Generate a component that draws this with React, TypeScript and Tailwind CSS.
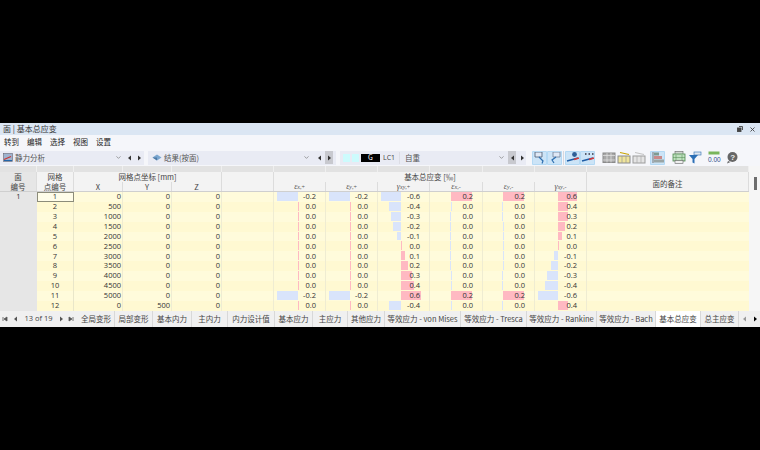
import React from "react";
import { ChevronDown, X } from "lucide-react";

const cols = "grid grid-cols-[37px_37px_49px_49px_50px_52px_52px_52px_52px_53px_52px_52px_162px]";
const cjk = { fontFamily: '"Noto Sans CJK SC", sans-serif' };

const xs = [0, 500, 1000, 1500, 2000, 2500, 3000, 3500, 4000, 4500, 5000, 0];
const ys = [0, 0, 0, 0, 0, 0, 0, 0, 0, 0, 0, 500];
const gPlus = ["-0.6", "-0.4", "-0.3", "-0.2", "-0.1", "0.0", "0.1", "0.2", "0.3", "0.4", "0.6", "-0.4"];
const gMinus = ["0.6", "0.4", "0.3", "0.2", "0.1", "0.0", "-0.1", "-0.2", "-0.3", "-0.4", "-0.6", "0.4"];
const zero = ["0.0", "0.0", "0.0", "0.0", "0.0", "0.0", "0.0", "0.0", "0.0", "0.0", "0.0", "0.0"];

const withEnds = (v: string) => zero.map((z, i) => (i === 0 || i === 10 ? v : z));

// bar length in px, negative goes left of the zero line
const strainCols = [
  { zero: 24, vals: withEnds("-0.2"), bars: [-21, 0.4, 1, 1, 1, 1, 1, 1, 0.4, 0.4, -21, 0.4] },
  { zero: 24, vals: withEnds("-0.2"), bars: [-21, 0.8, 0.8, 0.3, 0.3, 0.3, 0.3, 0.3, 0.8, 0.8, -21, 0.8] },
  { zero: 23, vals: gPlus, bars: [-20, -12, -10, -8, -4, 0.6, 4, 7, 11, 13, 20, -12] },
  { zero: 21, vals: withEnds("0.2"), bars: [21, -0.4, -1, -1, -1, -1, -1, -1, -0.4, -0.4, 21, -0.4] },
  { zero: 20, vals: withEnds("0.2"), bars: [21, -0.8, -0.8, -0.3, -0.3, -0.3, -0.3, -0.3, -0.8, -0.8, 21, -0.8] },
  { zero: 23, vals: gMinus, bars: [19, 10, 10, 7, 4, 0.6, -4, -7, -11, -13, -20, 10] },
];

const tabs = [
  { label: "全局变形", w: "w-[37px]" },
  { label: "局部变形", w: "w-[38px]" },
  { label: "基本内力", w: "w-[39px]" },
  { label: "主内力", w: "w-[36px]" },
  { label: "内力设计值", w: "w-[47px]" },
  { label: "基本应力", w: "w-[38px]" },
  { label: "主应力", w: "w-[35px]" },
  { label: "其他应力", w: "w-[37px]" },
  { label: "等效应力 - von Mises", w: "w-[76px]" },
  { label: "等效应力 - Tresca", w: "w-[66px]" },
  { label: "等效应力 - Rankine", w: "w-[70px]" },
  { label: "等效应力 - Bach", w: "w-[59px]" },
  { label: "基本总应变", w: "w-[45px]", active: true },
  { label: "总主应变", w: "w-[38px]" },
];

const Tri = ({ dir, color = "#333" }: { dir: "l" | "r"; color?: string }) => (
  <svg width="5" height="6" viewBox="0 0 5 6">
    <path d={dir === "l" ? "M4 0.5V5.5L1 3Z" : "M1 0.5V5.5L4 3Z"} fill={color} />
  </svg>
);

const Skip = ({ dir }: { dir: "l" | "r" }) => (
  <svg width="6" height="6" viewBox="0 0 6 6">
    <path d={dir === "l" ? "M1 1V5M5 1V5L2 3Z" : "M5 1V5M1 1V5L4 3Z"} stroke="#555" strokeWidth="0.8" fill="#555" />
  </svg>
);

const StepBtns = ({ dim }: { dim?: "l" | "r" }) => (
  <div className="flex h-[13px] shrink-0 items-center">
    <div className={`flex h-full w-[8px] items-center justify-center ${dim === "l" ? "bg-[#c8c9cf]" : ""}`}>
      <Tri dir="l" />
    </div>
    <div className="w-[2px]" />
    <div className={`flex h-full w-[8px] items-center justify-center ${dim === "r" ? "bg-[#c8c9cf]" : ""}`}>
      <Tri dir="r" />
    </div>
  </div>
);

const ToolIcon = ({ children, on }: { children: React.ReactNode; on?: boolean }) => (
  <div className={`flex h-[14px] w-[15px] shrink-0 items-center justify-center rounded-[1px] ${on ? "bg-[#cce4f7] outline outline-[#b4d9f4] -outline-offset-1" : ""}`}>
    <svg width="14" height="13" viewBox="0 0 14 13">
      {children}
    </svg>
  </div>
);

const Sep = () => <div className="mx-px h-[14px] w-px shrink-0 bg-[#d6d7de]" />;

const Th = ({ children, className = "" }: { children?: React.ReactNode; className?: string }) => (
  <div className={`flex items-center justify-center overflow-hidden whitespace-nowrap border-r border-[#dcdcdc] ${className}`}>{children}</div>
);

const Sub = ({ sym, sub }: { sym: string; sub: string }) => (
  <span className="text-[8px] text-[#555]" style={{ fontFamily: '"Liberation Serif", serif' }}>
    <i>{sym}</i>
    <span className="text-[6px]">
      <i>{sub.split(",")[0]}</i>,{sub.split(",")[1]}
    </span>
  </span>
);

export default function App() {
  return (
    <div className="flex h-[450px] w-[760px] flex-col bg-black pt-[123px] text-[#333]" style={cjk}>
      <div className="flex h-[204px] w-full flex-col overflow-hidden bg-white">
        {/* title */}
        <div className="flex h-[12px] shrink-0 items-center justify-between bg-[#dbe6f3] pl-[3px] pr-[3px] text-[8px] leading-none">
          <span>面 | 基本总应变</span>
          <div className="flex items-center gap-[6px] pr-[1px]">
            <svg width="6" height="6" viewBox="0 0 6 6" fill="none" stroke="#444" strokeWidth="0.9">
              <rect x="0.5" y="2" width="3.5" height="3.5" fill="#444" />
              <path d="M2 0.5H5.5V4" />
            </svg>
            <X size={7} strokeWidth={3} color="#444" />
          </div>
        </div>

        {/* menu */}
        <div className="flex h-[14px] shrink-0 items-center gap-[8px] bg-[#f5f6fa] pl-[4px] text-[7.5px] leading-none text-[#222]">
          <span>转到</span>
          <span>编辑</span>
          <span>选择</span>
          <span>视图</span>
          <span>设置</span>
        </div>

        {/* toolbar */}
        <div className="flex h-[17px] shrink-0 items-center bg-[#f5f6fa] text-[7.5px] leading-none">
          <div className="flex h-[14px] w-[124px] shrink-0 items-center bg-[#e9ebf4] pl-[3px]">
            <svg width="10" height="9" viewBox="0 0 10 9">
              <rect x="0.5" y="0.5" width="9" height="8" fill="#9fb3cf" stroke="#667" strokeWidth="0.6" />
              <path d="M1 6.5L8 3.5" stroke="#c33" strokeWidth="1.2" />
              <path d="M1 7.5H9" stroke="#26a" strokeWidth="1" />
            </svg>
            <span className="ml-[2px] flex-1 text-[#555]">静力分析</span>
            <ChevronDown size={7} color="#666" className="mr-[2px]" />
          </div>
          <div className="flex h-[14px] w-[20px] shrink-0 items-center justify-center bg-[#e9ebf4]">
            <StepBtns />
          </div>
          <div className="w-[4px] shrink-0" />
          <div className="flex h-[14px] w-[164px] shrink-0 items-center bg-[#e9ebf4] pl-[4px]">
            <svg width="10" height="7" viewBox="0 0 10 7">
              <path d="M0.5 3.5L5 0.5L9.5 3.5L5 6.5Z" fill="#7aa6cf" />
              <path d="M0.5 3.5L5 6.5V3.5Z" fill="#4e7aa5" />
            </svg>
            <span className="ml-[2px] flex-1 text-[#555]">结果(按面)</span>
            <ChevronDown size={7} color="#666" className="mr-[2px]" />
          </div>
          <div className="flex h-[14px] w-[24px] shrink-0 items-center justify-center bg-[#e9ebf4]">
            <StepBtns dim="r" />
          </div>
          <div className="w-[4px] shrink-0" />
          <div className="flex h-[14px] w-[186px] shrink-0 items-center bg-[#e9ebf4] pl-[3px]">
            <div className="h-[8px] w-[7px] bg-[#cdfbfd]" />
            <div className="ml-[2px] h-[8px] w-[7px] bg-[#cdfbfd]" />
            <div className="ml-[2px] flex h-[8px] w-[19px] items-center justify-center bg-black text-[7px] text-white">G</div>
            <span className="ml-[3px] w-[13px] text-[7px] text-[#444]" style={{ fontFamily: '"Open Sans", sans-serif' }}>LC1</span>
            <div className="mx-[3px] h-[12px] w-px bg-[#dcdde5]" />
            <span className="ml-[2px] flex-1 text-[#555]">自重</span>
            <ChevronDown size={7} color="#666" className="mr-[3px]" />
            <StepBtns dim="l" />
          </div>
          <div className="w-[6px] shrink-0" />
          <div className="flex shrink-0 items-center">
            <ToolIcon on>
              <path d="M2 1H9V6H2Z" fill="#dfe8f5" stroke="#5a6a80" strokeWidth="0.9" />
              <path d="M6 6L10 10L9 12.5" fill="none" stroke="#2e6fb0" strokeWidth="1.2" />
            </ToolIcon>
            <ToolIcon on>
              <path d="M5 1H12V6H5Z" fill="#dfe8f5" stroke="#7a8aa0" strokeWidth="0.9" />
              <path d="M8 6L4 9L6 12" fill="none" stroke="#2e6fb0" strokeWidth="1.2" />
            </ToolIcon>
            <Sep />
            <ToolIcon on>
              <circle cx="8.5" cy="3.5" r="2.4" fill="#2e5f96" />
              <path d="M1 10L12 7" stroke="#1f5da5" strokeWidth="1.6" />
              <path d="M8 8.5L13 7" stroke="#d43a3a" strokeWidth="1.6" />
            </ToolIcon>
            <ToolIcon on>
              <path d="M4 3H5.5M7.5 3H9M11 3H12.5" stroke="#334" strokeWidth="1.4" />
              <path d="M1 10L12 7" stroke="#1f5da5" strokeWidth="1.6" />
              <path d="M8 8.5L13 7" stroke="#d43a3a" strokeWidth="1.6" />
            </ToolIcon>
            <div className="w-[6px] shrink-0" />
            <ToolIcon>
              <rect x="1" y="2" width="12" height="9.5" fill="#a8a8a8" stroke="#8a8a8a" />
              <path d="M5 2V11.5M9 2V11.5M1 4.5H13M1 9H13" stroke="#e5e5e5" strokeWidth="0.7" />
            </ToolIcon>
            <ToolIcon>
              <rect x="1" y="5" width="12" height="7" fill="#efe49a" stroke="#8a8a8a" />
              <path d="M5 5V12M9 5V12" stroke="#999" strokeWidth="0.7" />
              <path d="M3 1.5L12 3.5" stroke="#c9a400" strokeWidth="1.2" />
            </ToolIcon>
            <ToolIcon>
              <rect x="1" y="5" width="12" height="7" fill="#e4e4e4" stroke="#9c9c9c" />
              <path d="M5 5V12M9 5V12" stroke="#aaa" strokeWidth="0.7" />
              <path d="M3 1.5L12 3.5" stroke="#c4c4c4" strokeWidth="1.2" />
            </ToolIcon>
            <div className="w-[4px] shrink-0" />
            <ToolIcon on>
              <path d="M2 1V12" stroke="#777" strokeWidth="1" />
              <rect x="3" y="1.5" width="5" height="3" fill="#7e9a92" />
              <rect x="3" y="5" width="8" height="3" fill="#c98a8a" />
              <rect x="3" y="8.5" width="10" height="3" fill="#9aa5a5" />
            </ToolIcon>
            <div className="w-[6px] shrink-0" />
            <ToolIcon>
              <rect x="3" y="0.5" width="8" height="3" fill="#cfd6cf" stroke="#666" strokeWidth="0.6" />
              <rect x="1" y="3" width="12" height="7" fill="#bfe0bf" stroke="#4f8a4f" strokeWidth="0.8" />
              <path d="M4 4V9M10 4V9M1 6.5H13" stroke="#4f8a4f" strokeWidth="0.5" />
              <rect x="3" y="9.5" width="8" height="3" fill="#eee" stroke="#666" strokeWidth="0.6" />
            </ToolIcon>
            <div className="w-px shrink-0" />
            <ToolIcon>
              <path d="M1 4H10L6.5 8V12.5L4.5 11.5V8Z" fill="#2c6fb5" />
              <rect x="6" y="1" width="7" height="3" fill="#dfe6ee" stroke="#2c6fb5" strokeWidth="0.6" />
            </ToolIcon>
            <div className="w-[4px] shrink-0" />
            <ToolIcon>
              <rect x="1.5" y="0.5" width="11" height="3" fill="#7ab55c" />
              <text x="1" y="11" fontSize="6.5" fill="#2b4f8a" style={{ fontFamily: '"Liberation Sans", sans-serif' }}>0.00</text>
            </ToolIcon>
            <div className="w-[3px] shrink-0" />
            <ToolIcon>
              <circle cx="7.5" cy="6" r="5" fill="#666" />
              <path d="M3 10L2 12.5L5.5 11Z" fill="#666" />
              <text x="5.3" y="9" fontSize="8" fontWeight="700" fill="#eee" style={{ fontFamily: '"Liberation Sans", sans-serif' }}>?</text>
            </ToolIcon>
          </div>
        </div>

        {/* table + scroll */}
        <div className="flex min-h-0 flex-1">
          <div className="flex w-[749px] shrink-0 flex-col">
            <div className={`${cols} h-[6px] shrink-0 bg-[#e2e2e2]`}>
              {Array.from({ length: 13 }).map((_, i) => (
                <div key={i} className="border-r border-[#efefef]" />
              ))}
            </div>
            <div className={`${cols} h-[20px] shrink-0 grid-rows-[10px_9px] border-b border-[#cfcfcf] bg-[#f3f3f3] text-[7.5px] leading-none text-[#444]`}>
              <Th className="row-span-2 flex-col bg-[#e6e6e6]">
                <span>面</span>
                <span className="mt-[2px]">编号</span>
              </Th>
              <Th className="row-span-2 flex-col">
                <span>网格</span>
                <span className="mt-[2px]">点编号</span>
              </Th>
              <Th className="col-span-3">网格点坐标 [mm]</Th>
              <Th className="row-span-2" />
              <Th className="col-span-6">基本总应变 [‰]</Th>
              <Th className="row-span-2 pt-[5px]">面的备注</Th>
              <Th>X</Th>
              <Th>Y</Th>
              <Th>Z</Th>
              <Th><Sub sym="ε" sub="x,+" /></Th>
              <Th><Sub sym="ε" sub="y,+" /></Th>
              <Th><Sub sym="γ" sub="xy,+" /></Th>
              <Th><Sub sym="ε" sub="x,-" /></Th>
              <Th><Sub sym="ε" sub="y,-" /></Th>
              <Th><Sub sym="γ" sub="xy,-" /></Th>
            </div>
            <div className="flex min-h-0 flex-1 flex-col overflow-hidden text-[7.5px] leading-none text-[#333]" style={{ fontFamily: '"Open Sans", sans-serif' }}>
              {xs.map((x, i) => (
                <div key={i} className={`${cols} h-[9.9px] shrink-0 ${i % 2 === 0 ? "bg-[#fffbdb]" : "bg-[#fff9d2]"}`}>
                  <div className="flex items-center justify-center bg-[#e6e6e6]">{i === 0 ? "1" : ""}</div>
                  <div className={`flex items-center justify-center border-r border-[#e9e6c9] ${i === 0 ? "outline outline-[#8c8c7a] -outline-offset-1 bg-[#fffde9]" : ""}`}>{i + 1}</div>
                  <div className="flex items-center justify-end border-r border-[#efecd2] pr-[1px]">{x}</div>
                  <div className="flex items-center justify-end border-r border-[#efecd2] pr-[1px]">{ys[i]}</div>
                  <div className="flex items-center justify-end border-r border-[#efecd2] pr-[1px]">0</div>
                  <div className="border-r border-[#efecd2]" />
                  {strainCols.map((c, j) => {
                    const b = c.bars[i];
                    const len = Math.abs(b);
                    return (
                      <div key={j} className="relative flex items-center justify-end border-r border-[#efecd2] pr-[9px]">
                        <div
                          className={`absolute bottom-[1px] top-0 ${b < 0 ? "bg-[#d9e4fb]" : "bg-[#ffb9c2]"}`}
                          style={{ left: b < 0 ? c.zero - len : c.zero, width: len }}
                        />
                        <span className="relative">{c.vals[i]}</span>
                      </div>
                    );
                  })}
                  <div />
                </div>
              ))}
            </div>
          </div>
          <div className="flex w-[11px] shrink-0 justify-center bg-[#f6f6f6] pl-[1px] pt-[11px]">
            <div className="h-[13px] w-[3px] bg-[#6d6d6d]" />
          </div>
        </div>

        {/* tabs */}
        <div className="flex h-[16px] shrink-0 items-center bg-[#f0f0f0] text-[7.5px] leading-none text-[#444]">
          <div className="flex w-[78px] shrink-0 items-center pl-[2px]">
            <Skip dir="l" />
            <div className="ml-[5px]"><Tri dir="l" color="#555" /></div>
            <span className="ml-[5px] w-[31px] text-center" style={{ fontFamily: '"Open Sans", sans-serif' }}>13 of 19</span>
            <div className="ml-[5px]"><Tri dir="r" color="#555" /></div>
            <div className="ml-[4px]"><Skip dir="r" /></div>
          </div>
          {tabs.map((t) => (
            <div key={t.label} className={`flex h-full ${t.w} shrink-0 items-center justify-center overflow-hidden whitespace-nowrap border-r border-[#d8d8d8] ${t.active ? "bg-white" : ""}`}>
              {t.label}
            </div>
          ))}
          <div className="flex flex-1 items-center justify-center gap-[6px]">
            <Tri dir="l" color="#999" />
            <Tri dir="r" color="#000" />
          </div>
        </div>
      </div>
    </div>
  );
}
